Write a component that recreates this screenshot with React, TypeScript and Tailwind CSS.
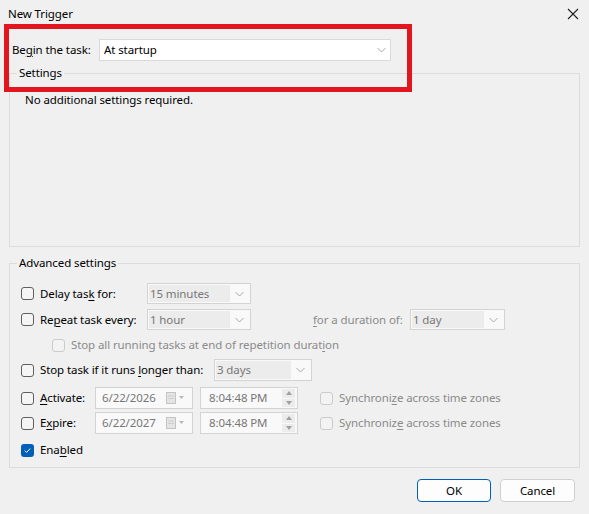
import React from "react";

const U = ({ children }: { children: React.ReactNode }) => (
  <span className="underline underline-offset-[2px] decoration-[1px]">{children}</span>
);

function Check({ checked = false, disabled = false }: { checked?: boolean; disabled?: boolean }) {
  if (checked)
    return (
      <span className="w-[13px] h-[13px] rounded-[3px] bg-[#005fb8] flex items-center justify-center shrink-0">
        <svg width="9" height="9" viewBox="0 0 9 9">
          <path d="M1.8 4.6 L3.6 6.4 L7.2 2.6" stroke="white" strokeWidth="1" fill="none" />
        </svg>
      </span>
    );
  return (
    <span
      className={
        disabled
          ? "w-[13px] h-[13px] rounded-[3px] border border-[#cbcbcb] bg-[#f3f3f3] shrink-0"
          : "w-[13px] h-[13px] rounded-[3px] border border-[#5f5f5f] bg-[#f5f5f5] shrink-0"
      }
    />
  );
}

const Chevron = () => (
  <svg width="9" height="6" viewBox="0 0 9 6">
    <path d="M0.5 1 L4.5 5 L8.5 1" stroke="#a8a8a8" strokeWidth="1" fill="none" />
  </svg>
);

function DSelect({ cls, text }: { cls: string; text: string }) {
  return (
    <div className={"border border-[#d3d3d3] bg-[#f9f9f9] flex p-[1px] " + cls}>
      <div className="flex-1 bg-[#ececec] text-[#777] pl-[1px] flex items-center leading-none">{text}</div>
      <div className="w-[19px] flex items-center justify-center">
        <Chevron />
      </div>
    </div>
  );
}

function DateBox({ text }: { text: string }) {
  return (
    <div className="w-[98px] h-[22px] border border-[#d3d3d3] bg-[#f9f9f9] flex items-center pl-[6px] pr-[6px] text-[#777]">
      <span className="flex-1">{text}</span>
      <svg width="20" height="12" viewBox="0 0 20 12">
        <rect x="0.5" y="0.5" width="9" height="11" fill="#e4e4e4" stroke="#c4c4c4" />
        <line x1="2" y1="4" x2="8" y2="4" stroke="#cfcfcf" />
        <line x1="2" y1="6.5" x2="8" y2="6.5" stroke="#cfcfcf" />
        <path d="M13 4 L18 4 L15.5 7 Z" fill="#b8b8b8" />
      </svg>
    </div>
  );
}

function TimeBox({ text }: { text: string }) {
  return (
    <div className="w-[98px] h-[22px] border border-[#d3d3d3] bg-[#f9f9f9] flex items-center pl-[8px] pr-[2px] text-[#777]">
      <span className="flex-1">{text}</span>
      <div className="flex flex-col w-[13px] h-[18px] gap-[1px]">
        <div className="flex-1 bg-[#ececec] flex items-center justify-center">
          <svg width="6" height="4" viewBox="0 0 6 4">
            <path d="M0 4 L3 0 L6 4 Z" fill="#a0a0a0" />
          </svg>
        </div>
        <div className="flex-1 bg-[#ececec] flex items-center justify-center">
          <svg width="6" height="4" viewBox="0 0 6 4">
            <path d="M0 0 L3 4 L6 0 Z" fill="#a0a0a0" />
          </svg>
        </div>
      </div>
    </div>
  );
}

export default function App() {
  return (
    <div
      className="w-[589px] h-[514px] bg-[#f0f0f0] relative overflow-hidden text-[11.5px] tracking-[-0.1px] leading-[16px] text-black"
      style={{ fontFamily: '"Noto Sans", "Open Sans", sans-serif' }}
    >
      {/* title bar */}
      <div className="h-[28px] flex items-center justify-between pl-[8px] pr-[10px]">
        <span>New Trigger</span>
        <svg width="12" height="12" viewBox="0 0 12 12">
          <path d="M1 1 L11 11 M11 1 L1 11" stroke="#222" strokeWidth="1.1" />
        </svg>
      </div>

      {/* begin the task */}
      <div className="mt-[11px] ml-[12px] flex items-center h-[22px]">
        <span className="w-[87px]">
          Be<U>g</U>in the task:
        </span>
        <div className="w-[292px] h-[22px] bg-white border border-[#d9d9d9] flex items-center justify-between pl-[4px] pr-[4px]">
          <span>At startup</span>
          <Chevron />
        </div>
      </div>

      {/* settings */}
      <fieldset className="ml-[9px] mt-[4px] w-[571px] h-[182px] border border-[#dcdcdc] p-0">
        <legend className="ml-[7px] px-[2px] leading-[16px]">Settings</legend>
        <div className="pt-[11px] pl-[15px]">No additional settings required.</div>
      </fieldset>

      {/* advanced */}
      <fieldset className="ml-[9px] mt-[8px] w-[571px] h-[213px] border border-[#dcdcdc] p-0">
        <legend className="ml-[7px] px-[2px] leading-[16px]">Advanced settings</legend>
        <div className="pt-[12px] pl-[11px]">
          <div className="flex items-center h-[21px]">
            <div className="w-[126px] flex items-center gap-[6px]">
              <Check />
              <span>
                Delay tas<U>k</U> for:
              </span>
            </div>
            <DSelect cls="w-[104px] h-[21px]" text="15 minutes" />
          </div>

          <div className="flex items-center h-[21px] mt-[5px]">
            <div className="w-[126px] flex items-center gap-[6px]">
              <Check />
              <span>
                Re<U>p</U>eat task every:
              </span>
            </div>
            <DSelect cls="w-[104px] h-[21px]" text="1 hour" />
            <span className="ml-[62px] w-[97px] text-[#8a8a8a]">
              <U>f</U>or a duration of:
            </span>
            <DSelect cls="w-[95px] h-[21px]" text="1 day" />
          </div>

          <div className="flex items-center h-[20px] mt-[5px] pl-[31px] gap-[6px] text-[#8a8a8a]">
            <Check disabled />
            <span>
              Stop all running tasks at end of repetition durat<U>i</U>on
            </span>
          </div>

          <div className="flex items-center h-[22px] mt-[4px]">
            <div className="w-[193px] flex items-center gap-[6px]">
              <Check />
              <span>
                Stop task if it runs <U>l</U>onger than:
              </span>
            </div>
            <DSelect cls="w-[98px] h-[22px]" text="3 days" />
          </div>

          <div className="flex items-center h-[22px] mt-[6px]">
            <div className="w-[74px] flex items-center gap-[6px]">
              <Check />
              <span>
                <U>A</U>ctivate:
              </span>
            </div>
            <DateBox text="6/22/2026" />
            <div className="ml-[7px]">
              <TimeBox text="8:04:48 PM" />
            </div>
            <div className="ml-[22px] flex items-center gap-[6px] text-[#8a8a8a]">
              <Check disabled />
              <span>
                Synchroni<U>z</U>e across time zones
              </span>
            </div>
          </div>

          <div className="flex items-center h-[22px] mt-[3px]">
            <div className="w-[74px] flex items-center gap-[6px]">
              <Check />
              <span>
                E<U>x</U>pire:
              </span>
            </div>
            <DateBox text="6/22/2027" />
            <div className="ml-[7px]">
              <TimeBox text="8:04:48 PM" />
            </div>
            <div className="ml-[22px] flex items-center gap-[6px] text-[#8a8a8a]">
              <Check disabled />
              <span>
                Synchroniz<U>e</U> across time zones
              </span>
            </div>
          </div>

          <div className="flex items-center h-[20px] mt-[6px] gap-[6px]">
            <Check checked />
            <span>
              Ena<U>b</U>led
            </span>
          </div>
        </div>
      </fieldset>

      {/* buttons */}
      <div className="mt-[11px] flex justify-end gap-[9px] pr-[14px]">
        <button className="w-[74px] h-[23px] rounded-[4px] border border-[#005fb8] bg-[#fdfdfd] flex items-center justify-center">
          OK
        </button>
        <button className="w-[75px] h-[23px] rounded-[4px] border border-[#d0d0d0] bg-[#fdfdfd] flex items-center justify-center">
          Cancel
        </button>
      </div>

      {/* red annotation frame */}
      <div className="absolute left-[4px] top-[24px] w-[408px] h-[68px] border-[5px] border-[#e3161f] pointer-events-none" />
    </div>
  );
}
